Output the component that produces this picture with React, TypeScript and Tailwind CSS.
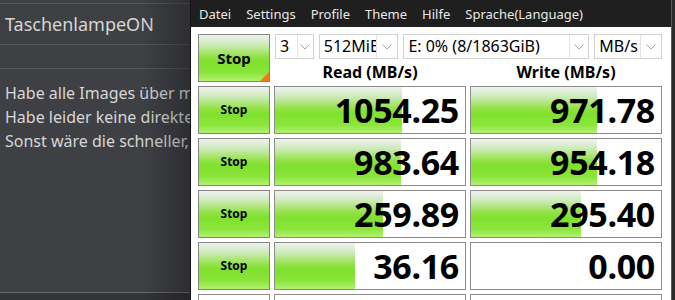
import React from "react";

const GRAD =
  "bg-[linear-gradient(180deg,#f0f2ef_0%,#cfeabd_20%,#95e24a_46%,#80e02d_58%,#8ae53a_82%,#b2f072_100%)]";

function Chevron() {
  return (
    <svg width="10" height="6" viewBox="0 0 10 6" className="shrink-0">
      <polyline points="0.5,0.5 5,5 9.5,0.5" fill="none" stroke="#a8a8a8" strokeWidth="1" />
    </svg>
  );
}

function Select({ w, text, inner }: { w: string; text: string; inner: string }) {
  return (
    <div className={`${w} h-[25px] border border-[#d2d2d2] bg-white flex items-center`}>
      <div className={`${inner} h-full border-r border-[#e4e4e4] overflow-hidden whitespace-nowrap pl-[4px] text-[16px] leading-[23px] text-black`}>
        {text}
      </div>
      <div className="flex-1 flex items-center justify-center">
        <Chevron />
      </div>
    </div>
  );
}

function StopBtn({ big }: { big?: boolean }) {
  return (
    <div
      className={`relative h-[48px] border border-[#858585] ${GRAD} flex items-center justify-center font-bold text-black ${
        big ? "text-[15px]" : "text-[12px]"
      }`}
    >
      Stop
      {big && (
        <div className="absolute right-0 bottom-0 w-0 h-0 border-l-[9px] border-l-transparent border-b-[9px] border-b-[#f27a17]" />
      )}
    </div>
  );
}

function NumBox({ value, fill }: { value: string; fill: number }) {
  return (
    <div className="relative h-[48px] border border-[#8c8c8c] bg-white overflow-hidden">
      <div className={`absolute left-0 top-0 bottom-0 ${GRAD}`} style={{ width: `${fill}px` }} />
      <div className="relative h-full flex items-center justify-end pr-[6px] text-[34px] font-bold text-black leading-none tracking-[-0.3px]">
        {value}
      </div>
    </div>
  );
}

const rows = [
  { r: "1054.25", rf: 127, w: "971.78", wf: 126 },
  { r: "983.64", rf: 126, w: "954.18", wf: 126 },
  { r: "259.89", rf: 108, w: "295.40", wf: 110 },
  { r: "36.16", rf: 80, w: "0.00", wf: 0 },
];

export default function App() {
  return (
    <div
      className="w-[675px] h-[300px] flex overflow-hidden"
      style={{ fontFamily: '"Noto Sans", "Open Sans", sans-serif' }}
    >
      {/* Left background panel */}
      <div className="relative w-[190px] h-full bg-[#3f4044] flex flex-col shrink-0 overflow-hidden">
        <div className="h-[3px]" />
        <div className="h-[41px] border-t border-[#56575a] flex items-center pl-[5px] text-[18px] text-[#d6d6d6] whitespace-nowrap">
          TaschenlampeON
        </div>
        <div className="h-[24px] border-t border-[#56575a]" />
        <div className="flex-1 border-t border-[#56575a] pt-[12px] pl-[5px] text-[16px] leading-[24px] text-[#d6d6d6] whitespace-nowrap">
          <div>Habe alle Images über m</div>
          <div>Habe leider keine direkte</div>
          <div>Sonst wäre die schneller,</div>
        </div>
        <div className="h-[8px] border-t border-[#6a6a6a] bg-[#333437]" />
        <div className="absolute right-0 top-0 bottom-0 w-[50px] bg-[linear-gradient(90deg,rgba(0,0,0,0)_0%,rgba(0,0,0,0.28)_100%)]" />
      </div>

      {/* App window */}
      <div className="w-[481px] h-full flex flex-col border-l border-[#161616] shrink-0 bg-white">
        <div className="h-[27px] bg-[#1f1f1f] flex items-center pl-[8px] pt-[2px] gap-[15px] text-[13px] text-[#e8e8e8] whitespace-nowrap shrink-0">
          <span>Datei</span>
          <span>Settings</span>
          <span>Profile</span>
          <span>Theme</span>
          <span>Hilfe</span>
          <span>Sprache(Language)</span>
        </div>
        <div className="flex-1 bg-white pl-[7px] pt-[7px] overflow-hidden">
          <div className="grid grid-cols-[72px_192px_192px] gap-x-[4px] gap-y-[4px]">
            <StopBtn big />
            <div className="col-span-2 h-[48px] flex flex-col">
              <div className="flex gap-[5px] pl-[1px]">
                <Select w="w-[39px]" inner="w-[22px]" text="3" />
                <Select w="w-[80px]" inner="w-[57px]" text="512MiB" />
                <Select w="w-[187px]" inner="w-[166px]" text="E: 0% (8/1863GiB)" />
                <Select w="w-[68px]" inner="w-[46px]" text="MB/s" />
              </div>
              <div className="h-[23px] grid grid-cols-[192px_192px] gap-x-[4px] items-center pt-[3px] text-[16px] leading-[20px] font-bold text-black">
                <div className="text-center">Read (MB/s)</div>
                <div className="text-center">Write (MB/s)</div>
              </div>
            </div>
            {rows.map((row, i) => (
              <React.Fragment key={i}>
                <StopBtn />
                <NumBox value={row.r} fill={row.rf} />
                <NumBox value={row.w} fill={row.wf} />
              </React.Fragment>
            ))}
            <div className="h-[48px] border border-[#8c8c8c]" />
            <div className="h-[48px] border border-[#8c8c8c]" />
            <div className="h-[48px] border border-[#8c8c8c]" />
          </div>
        </div>
      </div>

      {/* right edge strip */}
      <div className="flex-1 h-full bg-[#2a2a2a] border-l border-[#5a5a5a]" />
    </div>
  );
}
